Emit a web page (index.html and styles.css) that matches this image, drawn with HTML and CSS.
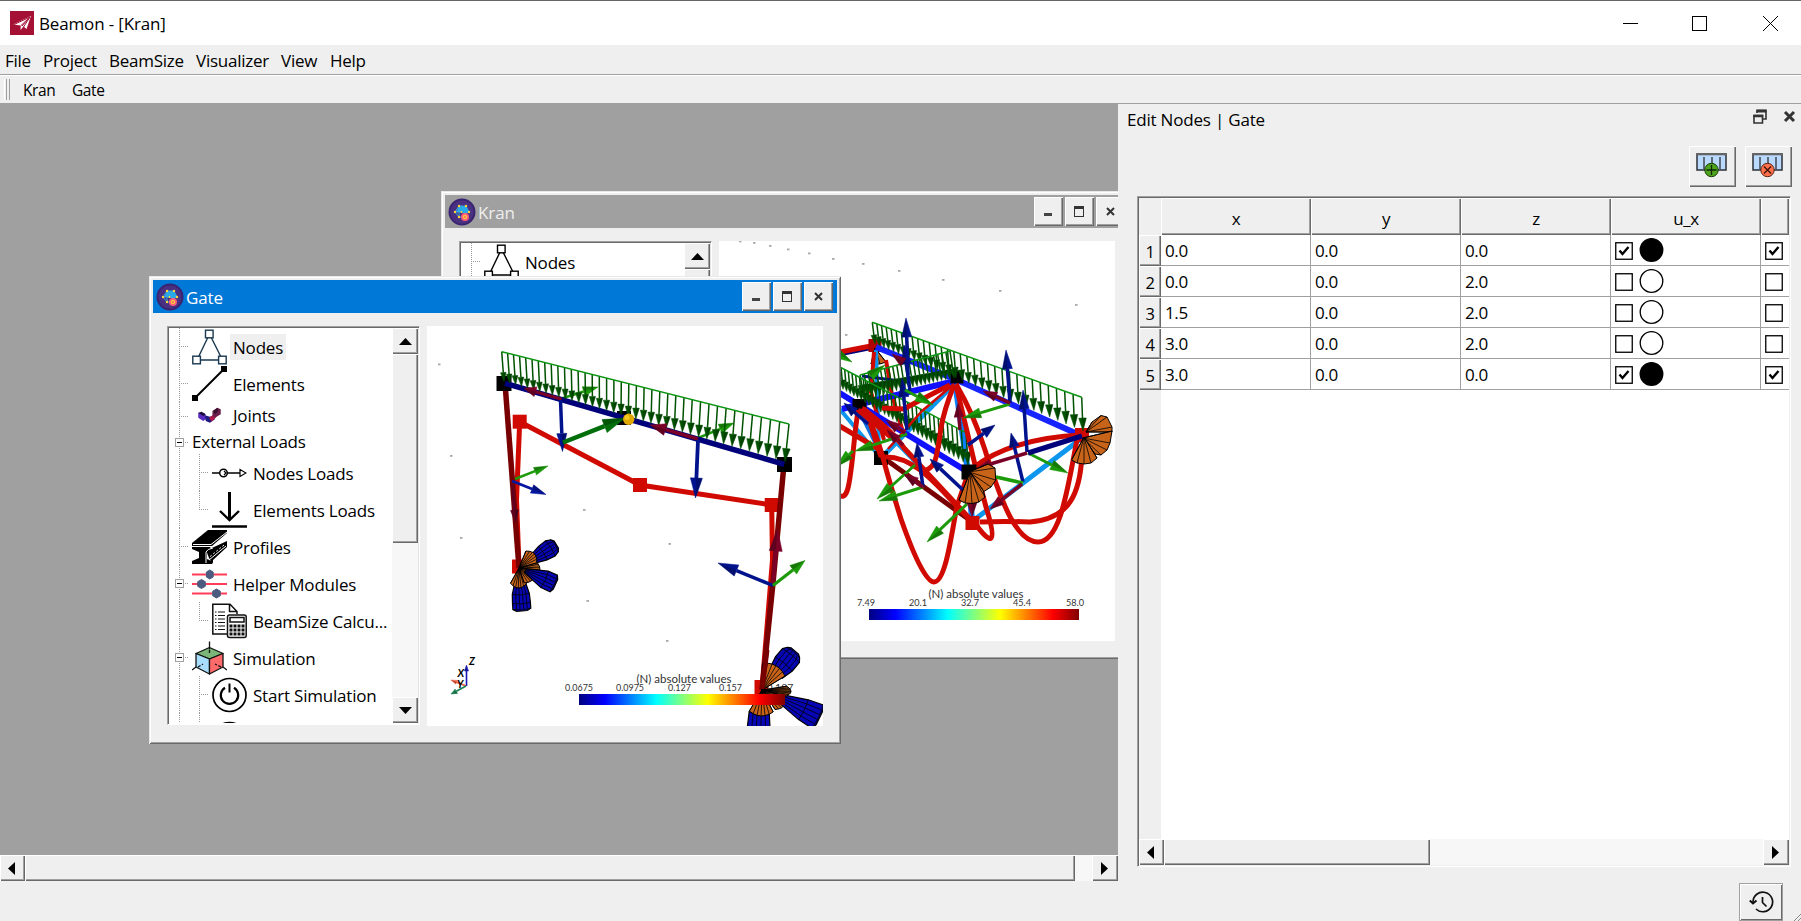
FILE: index.html
```html
<!DOCTYPE html>
<html lang="en">
<head>
<meta charset="utf-8">
<title>Beamon - [Kran]</title>
<link rel="stylesheet" href="styles.css">
</head>
<body>
<svg class="defs" width="0" height="0">
  <defs>
    <linearGradient id="jet">
      <stop offset="0" stop-color="#000080"/><stop offset=".125" stop-color="#0000ff"/>
      <stop offset=".375" stop-color="#00ffff"/><stop offset=".625" stop-color="#ffff00"/>
      <stop offset=".875" stop-color="#ff0000"/><stop offset="1" stop-color="#800000"/>
    </linearGradient>
    <symbol id="app" viewBox="0 0 28 28">
      <circle cx="14" cy="14" r="13.500" fill="#3a2471"/><circle cx="14" cy="14" r="11.500" fill="#4a3080"/>
      <path d="M11 8h7l3 6-4 3-3-3H8z" fill="#28a9e8"/>
      <path d="M11 8h7l3 6M7 14h8M11 8v11M7 14l4-6M7 14l4 5h3" fill="none" stroke="#35a5e0" stroke-width="1"/>
      <g fill="#ffd83a"><circle cx="11" cy="8" r="1.200"/><circle cx="18" cy="8" r="1.200"/><circle cx="21" cy="14" r="1.200"/><circle cx="7" cy="14" r="1.200"/><circle cx="13.500" cy="14" r="1"/><circle cx="11" cy="19" r="1.200"/></g>
      <circle cx="17" cy="19" r="4" fill="#ff5a7d"/><circle cx="17" cy="19" r="1.800" fill="#ff7e5d" stroke="#ffd83a" stroke-width="1"/>
    </symbol>
    <symbol id="nodes" viewBox="0 0 35 36">
      <g fill="#fff" stroke="currentColor" stroke-width="1.400"><path d="M5 31L17.500 5l13 26z"/><rect x="13.500" y="1.200" width="7.600" height="7.600"/><rect x=".8" y="27.200" width="7.600" height="7.600"/><rect x="26.600" y="27.200" width="7.600" height="7.600"/></g>
    </symbol>
    <symbol id="table" viewBox="0 0 31 25">
      <rect x="1" y="1" width="29" height="16" fill="#b9d9ff" stroke="#2b2f36" stroke-width="1.500"/><path d="M0 1.300h31" stroke="#666" stroke-width="2"/>
      <path d="M8 4v12M16 4v12M24 4v12" stroke="#5f6b7a" stroke-width="2"/>
    </symbol>
  </defs>
</svg>

<div class="app">
  <header class="titlebar">
    <svg class="logo" width="24" height="24" viewBox="0 0 24 24"><rect width="24" height="24" fill="#a51135"/><path d="M3 13.500L21 5 16.500 18l-3-2.500-3 3.500.3-4.500z" fill="#fff"/><path d="M3.500 13.800L20 6l-9 8.500M12 15l8-9-6.500 10" stroke="#a51135" stroke-width="1" fill="none"/></svg>
    <span class="title">Beamon - [Kran]</span>
    <svg class="syscontrols" width="160" height="20" viewBox="0 0 160 20" fill="none" stroke="#000" stroke-width="1"><path d="M0 10.500h15"/><rect x="69.500" y="3.500" width="14" height="14"/><path d="M140 3l15 15M155 3l-15 15"/></svg>
  </header>
  <nav class="menubar"><span class="m1">File</span><span class="m2">Project</span><span class="m3">BeamSize</span><span class="m4">Visualizer</span><span class="m5">View</span><span>Help</span></nav>
  <div class="toolbar"><i class="grip"></i><span class="kran">Kran</span><span>Gate</span></div>

  <div class="main">
    <div class="workspace">
      <div class="mdi">
        <section class="window kran-window">
          <div class="caption inactive"><svg width="28" height="28"><use href="#app"/></svg><span>Kran</span>
            <b class="cb"><i class="g-min"></i></b><b class="cb"><i class="g-max"></i></b><b class="cb"><svg width="9" height="9" viewBox="0 0 9 9"><path d="M1 1l7 7M8 1L1 8" stroke="#333" stroke-width="2"/></svg></b></div>
          <div class="content">
            <div class="treebox">
              <div class="tree"><div class="row"><i class="br tee"></i><svg class="ic black" width="35" height="36"><use href="#nodes"/></svg><span class="lb">Nodes</span></div></div>
              <div class="vscroll"><b class="sb"><svg width="13" height="7"><path d="M0 7L6.500 0 13 7z"/></svg></b><b class="thumb"></b></div>
            </div>
            <svg id="kran-view" class="view" width="396" height="400" viewBox="719 241 396 400"></svg>
          </div>
        </section>

        <section class="window gate-window">
          <div class="caption"><svg width="28" height="28"><use href="#app"/></svg><span>Gate</span>
            <b class="cb"><i class="g-min"></i></b><b class="cb"><i class="g-max"></i></b><b class="cb"><svg width="9" height="9" viewBox="0 0 9 9"><path d="M1 1l7 7M8 1L1 8" stroke="#333" stroke-width="2"/></svg></b></div>
          <div class="content">
            <div class="treebox">
              <div class="tree">
                <div class="row"><i class="br tee"></i><svg class="ic navy" width="35" height="36"><use href="#nodes"/></svg><span class="lb sel">Nodes</span></div>
                <div class="row"><i class="br tee"></i><svg class="ic" width="35" height="36" viewBox="0 0 35 36"><path d="M3 32L32 3" stroke="#000" stroke-width="2"/><path d="M29 0h6v6h-6zM0 29h6v6H0z"/></svg><span class="lb">Elements</span></div>
                <div class="row joints"><i class="br tee"></i><svg class="ic" width="35" height="20" viewBox="0 0 35 24"><path d="M4 8l8 1 2 6-4 3-6-4z" fill="#5a2bc0"/><path d="M4 8l4-1 5 3-3 2z" fill="#1a0a3a"/><path d="M12 11l6 2 5-2 1 5-6 4-5-2z" fill="#1d1a80"/><path d="M17 14l6-4 3 3-6 6z" fill="#b01848"/><path d="M21 6l6-4 4 2v6l-7 4-3-3z" fill="#6b1f4a"/><path d="M22 6l5-4 1 4-4 4z" fill="#36102b"/></svg><span class="lb">Joints</span></div>
                <div class="row ext"><i class="br tee"><em class="ex"></em></i><span class="lb">External Loads</span></div>
                <div class="row"><i class="br pass"></i><i class="br tee"></i><svg class="ic" width="35" height="12" viewBox="0 0 35 12" fill="none" stroke="#000" stroke-width="1.500"><path d="M0 6h7M15.500 6H28"/><circle cx="11.500" cy="6" r="3.800"/><path d="M28 2.500L34 6l-6 3.500zM12 4l2 2-2 2" stroke-width="1.200"/></svg><span class="lb">Nodes Loads</span></div>
                <div class="row"><i class="br pass"></i><i class="br end"></i><svg class="ic" width="35" height="36" viewBox="0 0 35 36" fill="none" stroke="#000"><path d="M17.500 0v28" stroke-width="3"/><path d="M8 19l9.500 9 9.500-9" stroke-width="2.400"/><path d="M0 34.500h35" stroke-width="2.500"/></svg><span class="lb">Elements Loads</span></div>
                <div class="row"><i class="br tee"></i><svg class="ic" width="35" height="36" viewBox="0 0 35 36"><path d="M16 1h19v3L20 17H0v-3z"/><path d="M0 18h18l2 3-5 1v8l5 2v3H0v-3l7-3v-6l-7-3z"/><path d="M17 29l-3-8 8-3L35 12v6L21 31v4z"/><path d="M1 15.500h18L35 3M17 31l17-14" stroke="#fff" fill="none"/><path d="M15 30L32 16" stroke="#fff" stroke-dasharray="2 2"/><path d="M14 34V23q1-3 7-4" stroke="#fff" fill="none"/></svg><span class="lb">Profiles</span></div>
                <div class="row"><i class="br tee"><em class="ex"></em></i><svg class="ic" width="35" height="36" viewBox="0 0 35 36"><path d="M0 8.500h35M0 18h35M0 27.500h35" stroke="#ff3d58" stroke-width="2"/><path d="M17.800 4l3.400 2v5l-3.400 2-3.400-2V6zM9.500 13.500l3.800 2.200v4.600L9.500 22.500l-3.800-2.200v-4.600zM24.500 23l3.800 2.200v4.600L24.500 32l-3.800-2.200v-4.600z" fill="#4c5a7f" stroke="#4c5a7f"/></svg><span class="lb">Helper Modules</span></div>
                <div class="row"><i class="br pass"></i><i class="br end"></i><svg class="ic" width="35" height="36" viewBox="0 0 35 36" fill="none" stroke="#111" stroke-width="1.500"><path d="M15 31H.8V1.200H18l7 7.300V11M17.500 1.500v7h7"/><path d="M3 9h1.500M6 9h7M3 12.500h1.500M6 12.500h7M3 16h1.500M6 16h7M3 19.500h1.500M6 19.500h7M3 23h1.500M6 23h7M3 26.500h1.500M6 26.500h7" stroke-width="1.200"/><rect x="15.500" y="12" width="18.700" height="22.500" rx="2" fill="#fff"/><rect x="18" y="14.500" width="14" height="4.500"/><path d="M17.500 23h15M17.500 27h15M17.500 31h15" stroke-width="3" stroke-dasharray="3 1"/></svg><span class="lb">BeamSize Calcu...</span></div>
                <div class="row"><i class="br tee"><em class="ex"></em></i><svg class="ic" width="35" height="36" viewBox="0 0 35 36" stroke="#111" stroke-width="1.300" stroke-linejoin="round"><path d="M17.500 7.500L31 13.500 17.500 19 4 13.500z" fill="#79b678"/><path d="M4 13.500L17.500 19v15L4 27z" fill="#a8defb"/><path d="M31 13.500L17.500 19v15L31 27z" fill="#ff6b6b"/><path d="M17.500 1.500v8M4 27l-4 3M31 27l4 3"/><path d="M6 27l5-3M29 27l-6-3M17.500 10v3" stroke-dasharray="3 1.500"/></svg><span class="lb">Simulation</span></div>
                <div class="row"><i class="br pass"></i><i class="br tee"></i><svg class="ic" width="35" height="36" viewBox="0 0 35 36" fill="none" stroke="#000" stroke-width="1.700"><circle cx="17.500" cy="18" r="16.500"/><path d="M17.500 6.500v9" stroke-width="2"/><path d="M13 10.800a8.700 8.700 0 1 0 9 0" stroke-width="2.200"/></svg><span class="lb">Start Simulation</span></div>
                <div class="row"><i class="br pass"></i><i class="br tee"></i><svg class="ic" width="35" height="36" viewBox="0 0 35 36" fill="none" stroke="#000" stroke-width="1.700"><circle cx="17.500" cy="25" r="16.500"/></svg></div>
              </div>
              <div class="vscroll"><b class="sb"><svg width="13" height="7"><path d="M0 7L6.500 0 13 7z"/></svg></b><b class="thumb"></b><i class="track"></i><b class="sb"><svg width="13" height="7"><path d="M0 0L6.500 7 13 0z"/></svg></b></div>
            </div>
            <svg id="gate-view" class="view" width="396" height="400" viewBox="427 326 396 400"></svg>
          </div>
        </section>
      </div>
      <div class="hscroll"><b class="sb"><svg width="7" height="13"><path d="M7 0L0 6.500 7 13z"/></svg></b><b class="thumb"></b><i class="track"></i><b class="sb"><svg width="7" height="13"><path d="M0 0L7 6.500 0 13z"/></svg></b></div>
    </div>

    <aside class="dock">
      <div class="dockhead"><span>Edit Nodes | Gate</span>
        <svg width="45" height="16" viewBox="0 0 45 16" fill="none" stroke="#333"><path d="M4 4V1.500h9V10h-3" stroke-width="1.600"/><path d="M3.500 2h10" stroke-width="3"/><path d="M1 6.500h8.500V14H1z" fill="#efefef" stroke-width="1.600"/><path d="M.3 7h10" stroke-width="2.500"/><path d="M32 3l9 9M41 3l-9 9" stroke-width="3"/></svg></div>
      <div class="tools">
        <button class="tool"><svg width="31" height="25" viewBox="0 0 31 25"><use href="#table" width="31" height="25"/><circle cx="15.500" cy="17" r="6.700" fill="#4ea41c" stroke="#173a08"/><path d="M15.500 12v10M10.500 17h10" stroke="#10260a" stroke-width="1.300"/></svg></button>
        <button class="tool"><svg width="31" height="25" viewBox="0 0 31 25"><use href="#table" width="31" height="25"/><circle cx="15.500" cy="17" r="6.700" fill="#ff714c" stroke="#5b2413"/><path d="M12 13.500l7 7M19 13.500l-7 7" stroke="#3a1207" stroke-width="1.300"/></svg></button>
      </div>
      <div class="grid">
        <div class="cells" id="cells"></div>
        <div class="hscroll"><b class="sb"><svg width="7" height="13"><path d="M7 0L0 6.500 7 13z"/></svg></b><b class="thumb"></b><i class="track"></i><b class="sb"><svg width="7" height="13"><path d="M0 0L7 6.500 0 13z"/></svg></b></div>
      </div>
    </aside>
  </div>

  <footer class="status"><button class="history"><svg width="25" height="24" viewBox="0 0 25 24" fill="none" stroke="#111" stroke-width="1.700"><path d="M4 12A9.800 9.800 0 1 1 7 19"/><path d="M.8 10.500L4 13.500l3.500-3" stroke-width="2"/><path d="M13.500 7v5.500l4 4"/></svg></button>
  <svg class="sizegrip" width="7" height="7"><path d="M0 7L7 0M4 7l3-3" stroke="#888"/></svg></footer>
</div>
<script src="scene.js"></script>
</body>
</html>
```

FILE: styles.css
```css
* { box-sizing: border-box; }
body { margin: 0; background: #efefef; font: 17px/24px "Open Sans", "Noto Sans", sans-serif; letter-spacing: -0.25px; color: #000; overflow: hidden; }
svg { display: block; flex: none; }
i, em, b { font-style: normal; font-weight: normal; }
.defs { position: absolute; }
.app { width: 1801px; height: 921px; display: flex; flex-direction: column; background: #efefef; overflow: hidden; }

.titlebar { height: 45px; background: #fff; border-top: 1px solid #666; display: flex; align-items: center; padding-left: 10px; flex: none; }
.title { margin-left: 5px; padding-top: 2px; letter-spacing: -0.15px; }
.syscontrols { margin-left: auto; margin-right: 18px; }
.menubar { height: 30px; border-bottom: 1px solid #a0a0a0; display: flex; align-items: center; padding-left: 5px; flex: none; padding-top: 2px; }
.m1 { width: 38px; } .m2 { width: 66px; } .m3 { width: 87px; } .m4 { width: 85px; } .m5 { width: 49px; }
.toolbar { height: 28px; border-top: 1px solid #fff; display: flex; align-items: center; flex: none; font-size: 15.5px; letter-spacing: -0.4px; padding-left: 4px; }
.grip { width: 6px; height: 21px; border-left: 1px solid #fff; border-right: 1px solid #a0a0a0; background: linear-gradient(90deg, transparent 1px, #a0a0a0 1px 2px, transparent 2px); margin-right: 13px; }
.kran { width: 49px; }

.main { display: flex; height: 778px; flex: none; }
.workspace { width: 1118px; display: flex; flex-direction: column; }
.mdi { position: relative; height: 752px; background: #a0a0a0; overflow: hidden; }

.window { position: absolute; width: 692px; height: 468px; background: #efefef; padding: 4px; box-shadow: inset 1px 1px #e8e8e8, inset -1px -1px #696969, inset 2px 2px #fff, inset -2px -2px #a0a0a0; }
.kran-window { left: 441px; top: 88px; }
.gate-window { left: 149px; top: 173px; }
.caption { height: 33px; background: #0078d7; color: #fff; display: flex; align-items: center; padding: 0 4px 0 3px; gap: 2px; letter-spacing: -0.1px; }
.caption.inactive { background: #a0a0a0; color: #eee; }
.caption span { flex: 1; padding-top: 2px; }
.cb, .sb, .thumb, .tool { background: #efefef; box-shadow: inset 1px 1px #fff, inset -1px -1px #696969, inset -2px -2px #a0a0a0; display: flex; align-items: center; justify-content: center; }
.cb { width: 29px; height: 29px; }
.g-min { width: 8px; height: 3px; background: #444; margin: 6px 2px 0 0; }
.g-max { width: 10px; height: 11px; border: 1px solid #333; border-top-width: 3px; margin-right: 1px; }
.content { display: flex; gap: 7px; padding: 13px 0 0 14px; }

.treebox { width: 253px; height: 399px; display: flex; background: #fff; border: 1px solid; border-color: #a0a0a0 #fff #fff #a0a0a0; box-shadow: inset 1px 1px #696969, inset -1px 0 #e3e3e3; padding: 1px; overflow: hidden; }
.tree { width: 223px; overflow: hidden; }
.row { height: 37px; display: flex; align-items: center; }
.joints { height: 28px; }
.ext { height: 24px; }
.br { width: 20px; height: 100%; flex: none; display: flex; align-items: center; background-repeat: no-repeat; }
.br { --v: repeating-linear-gradient(#9a9a9a 0 1px, transparent 1px 2px); --h: repeating-linear-gradient(90deg, #9a9a9a 0 1px, transparent 1px 2px); }
.tee { background-image: var(--v), var(--h); background-size: 1px 100%, 10px 1px; background-position: 10px 0, 10px 50%; }
.end { background-image: var(--v), var(--h); background-size: 1px 50%, 10px 1px; background-position: 10px 0, 10px 50%; }
.pass { background-image: var(--v); background-size: 1px 100%; background-position: 10px 0; }
.ex { width: 9px; height: 9px; margin-left: 6px; border: 1px solid #a0a0a0; background: linear-gradient(#000, #000) center / 5px 1px no-repeat #fff; }
.ic { margin-left: 3px; }
.navy { color: #18384f; } .black { color: #000; }
.lb { margin-left: 3px; padding: 2px 3px 0; white-space: nowrap; letter-spacing: -0.2px; }
.joints .lb { padding-top: 0; }
.ext .lb { margin-left: 0; padding-top: 0; }
.sel { background: #efefef; }
.vscroll { width: 26px; display: flex; flex-direction: column; background: #f7f7f7; }
.vscroll .sb { height: 26px; flex: none; }
.vscroll .thumb { height: 189px; flex: none; }
.track { flex: 1; background: #f7f7f7; }
.view { background: #fff; }

.hscroll { height: 26px; display: flex; flex: none; }
.hscroll .sb { width: 26px; padding-right: 2px; }
.hscroll .sb:first-child { width: 25px; padding-right: 3px; }
.workspace .hscroll .thumb { width: 1050px; }
.grid .hscroll .thumb { width: 266px; }

.dock { flex: 1; border-top: 1px solid #a0a0a0; padding: 4px 0 0 9px; font-size: 17px; letter-spacing: -0.4px; }
.dockhead { display: flex; justify-content: space-between; height: 38px; letter-spacing: -0.2px; }
.dockhead svg { margin: 1px 3px 0 0; }
.tools { display: flex; justify-content: flex-end; gap: 9px; padding-right: 9px; }
.tool { width: 47px; height: 41px; border: 0; padding: 0 2px 2px 0; margin: 0; }
.grid { margin: 9px 0 0 10px; width: 654px; height: 671px; border: 1px solid; border-color: #a0a0a0 #fff #fff #a0a0a0; box-shadow: inset 1px 1px #696969; padding: 1px; display: flex; flex-direction: column; }
.cells { flex: 1; display: grid; grid-template-columns: 22px repeat(4, 150px) 28px; grid-template-rows: 37px repeat(5, 31px) 1fr; background: #fff; overflow: hidden; }
.hd { background: #efefef; box-shadow: inset 1px 1px #fff, inset -1px -1px #696969, inset -2px -2px #a0a0a0; display: flex; align-items: center; justify-content: center; padding-top: 4px; }
.hd.n { padding: 2px 0 0; font-size: 16.5px; }
.hd.corner, .hd.rest { box-shadow: none; }
.cell { border-right: 1px solid #a0a0a0; border-bottom: 1px solid #a0a0a0; display: flex; align-items: center; padding: 2px 0 0 4px; gap: 6px; overflow: hidden; }
.cell.last { border-right: 0; }

.status { flex: 1; position: relative; display: flex; justify-content: flex-end; padding: 2px 18px 0 0; }
.history { width: 44px; height: 38px; border: 1px solid #a0a0a0; background: #efefef; box-shadow: inset 1px 1px #fff, inset -1px -1px #696969; display: flex; align-items: center; justify-content: center; padding: 0; }
.sizegrip { position: absolute; right: 0; bottom: 0; }
.legend { font-family: Lato, sans-serif; fill: #333; letter-spacing: 0; }
```

FILE: scene.js
```js
const r1 = v => Math.round(v * 10) / 10;
const pts = a => a.map(p => p.map(r1).join(',')).join(' ');

function line(a, color, w) {
  return `<polyline points="${pts(a)}" fill="none" stroke="${color}" stroke-width="${w}"/>`;
}
function curve(d, w = 5) {
  return `<path d="${d}" fill="none" stroke="#d00a00" stroke-width="${w}" stroke-linejoin="round"/>`;
}
function square(x, y, color, s = 14) {
  return `<rect x="${x - s / 2}" y="${y - s / 2}" width="${s}" height="${s}" fill="${color}"/>`;
}
function arrow(x1, y1, x2, y2, color, w = 3, hl = 14, hw = 5) {
  const L = Math.hypot(x2 - x1, y2 - y1), ux = (x2 - x1) / L, uy = (y2 - y1) / L;
  const bx = x2 - ux * hl, by = y2 - uy * hl;
  return line([[x1, y1], [bx, by]], color, w) +
    `<polygon points="${pts([[x2, y2], [bx - uy * hw, by + ux * hw], [bx, by], [bx + uy * hw, by - ux * hw]])}" fill="${color}" stroke="${color}" stroke-width=".5"/>` +
    `<polygon points="${pts([[x2, y2], [bx, by], [bx + uy * hw, by - ux * hw]])}" fill="#000" opacity=".22"/>`;
}
// Distributed load: evenly foreshortened arrows between a top and a bottom edge.
function load(t0, t1, b0, b1, n, first) {
  let s = '';
  for (let i = 0; i <= n; i++) {
    const f = first * i / n + (1 - first) * (i / n) ** 2;
    const tx = t0[0] + (t1[0] - t0[0]) * f, ty = t0[1] + (t1[1] - t0[1]) * f;
    const bx = b0[0] + (b1[0] - b0[0]) * f, by = b0[1] + (b1[1] - b0[1]) * f;
    s += arrow(tx, ty, bx, by, '#005200', 1.5, 9 + 4 * f, 2.8 + f);
  }
  return s + line([t0, t1], '#0a9410', 1.5);
}
function fan(apex, rim, color = '#c8641a') {
  return `<polygon points="${pts([apex, ...rim])}" fill="${color}" stroke="#000" stroke-width="1"/>` +
    rim.map(p => line([apex, p], '#000', .8)).join('');
}
function cone(x, y, deg, len, hw, color) {
  const a = deg * Math.PI / 180, c = Math.cos(a), s = Math.sin(a), rim = [];
  for (let i = -3; i <= 3; i++) {
    const d = len - (i * i) * .5, o = hw * i / 3;
    rim.push([x + c * d - s * o, y + s * d + c * o]);
  }
  return fan([x, y], rim, color);
}
// Barrel given as [distance, half width] rings along a direction.
function barrel(x, y, deg, rings) {
  const a = deg * Math.PI / 180, c = Math.cos(a), s = Math.sin(a);
  const at = (d, o) => [x + c * d - s * o, y + s * d + c * o];
  const left = rings.map(r => at(r[0], r[1])), right = rings.map(r => at(r[0], -r[1])).reverse();
  const e = rings[rings.length - 1];
  let out = `<polygon points="${pts([...left, at(e[0] + 2, e[1] * .6), at(e[0] + 2, -e[1] * .6), ...right])}" fill="#0606b4" stroke="#000" stroke-width="1.2"/>`;
  for (const k of [-.6, -.2, .2, .6]) out += line(rings.map(r => at(r[0], r[1] * k)), '#000', .8);
  for (const r of rings.slice(1)) out += line([at(r[0], r[1]), at(r[0] + 1, 0), at(r[0], -r[1])], '#000', .8);
  return out;
}
const specks = a => a.map(p => `<rect x="${p[0]}" y="${p[1]}" width="2.5" height="1.8" fill="#a8a8a8"/>`).join('');
const bar = (x, y, w) => `<rect x="${x}" y="${y}" width="${w}" height="11" fill="url(#jet)"/>`;
const label = (x, y, t, size, w) => `<text class="legend" x="${x}" y="${y}" font-size="${size}" text-anchor="middle" textLength="${w}" lengthAdjust="spacingAndGlyphs">${t}</text>`;

const RED = '#d00a00', DARK = '#780000', NAVY = '#00007a', BLUE = '#00128c', GREEN = '#1d9a0a', MAG = '#7a0028';

function gate() {
  let s = specks([[438, 363.500], [450, 455], [460, 537], [583, 509], [668.500, 543], [586.500, 600], [666, 640]]);
  s += arrow(560, 399, 598, 387, GREEN, 2.5, 15, 5) + arrow(698, 438, 734, 423, GREEN, 2.5, 15, 5);
  s += line([[519.700, 421.700], [516.500, 500], [519, 566]], RED, 5);
  s += line([[519.700, 421.700], [640, 485], [771.700, 505], [772.500, 560], [762, 688]], RED, 5);
  s += square(519.700, 421.700, RED) + square(640, 485, RED) + square(771.700, 505, RED) + square(519, 566.500, RED) + square(761.500, 687, RED);
  s += line([[505, 383], [519, 568]], DARK, 5.500) + line([[784, 464], [773, 583], [762, 690]], DARK, 5.500);
  s += square(504, 383.500, '#000', 15) + square(624, 418, '#000', 14) + square(784.500, 464.500, '#000', 15);
  s += line([[505, 383.300], [784.300, 464.300]], NAVY, 5.500);
  s += load([501.700, 351.700], [789, 424], [504, 381.500], [785, 461.500], 38, .77);
  s += arrow(561.700, 399.300, 524, 388.300, MAG, 3, 12, 5) + arrow(698, 439, 650, 425, MAG, 3.500, 16, 6);
  s += arrow(560.500, 400, 562.500, 451.500, BLUE, 3.500, 18, 5) + arrow(698, 440, 695.500, 498, BLUE, 3.800, 20, 6);
  s += arrow(563, 442.500, 625, 418, '#006e0a', 4.500, 22, 7);
  s += '<circle cx="628.700" cy="419.300" r="5.700" fill="#e0a800"/><circle cx="627" cy="417.500" r="2.500" fill="#f6c820"/>';
  s += arrow(515, 479, 548, 466, GREEN, 2.500, 14, 4) + arrow(512, 481, 546, 494.500, '#0516a0', 2.800, 15, 4.500);
  s += arrow(512.500, 485, 515.500, 523, '#5f0020', 3, 13, 4);
  s += arrow(773, 585, 777.500, 529, MAG, 4, 22, 6.500) + arrow(773, 585.500, 718, 563, BLUE, 3.500, 20, 6) + arrow(773, 585.500, 805, 560.500, GREEN, 3.200, 15, 5.500);

  s += cone(519, 568, 5, 21, 8, '#a95818') + barrel(519, 568, 86, [[17, 6], [26, 8.500], [35, 9], [41, 9]]) + cone(519, 568, 92, 20, 8);
  s += barrel(519, 568, -32, [[18, 5], [28, 8], [37, 9], [42, 7]]) + cone(519, 568, -42, 21, 8);
  s += cone(519, 568, 40, 18, 8) + barrel(519, 568, 24, [[7, 2], [28, 9], [38, 9]]);
  s += label(780, 691, '0.187', 9.5, 27);
  s += barrel(760, 690, 92, [[22, 10], [45, 12]]) + cone(762, 690, 92, 26, 12);
  s += cone(763, 690, 38, 26, 8) + barrel(763, 690, 26, [[22, 5], [45, 11], [61, 13]]) + cone(763, 690, 3, 28, 5, '#8b4a14');
  s += barrel(762, 690, -50, [[22, 8], [34, 11], [45, 11], [49, 8]]) + cone(762, 690, -60, 28, 13);
  s += line([[767, 650], [762, 689]], DARK, 5);
  s += bar(579, 694, 206) + label(684, 682.500, '(N) absolute values', 10.500, 95);
  s += [['0.0675', 579, 28], ['0.0975', 630, 28], ['0.127', 679.500, 23], ['0.157', 730.500, 23]].map(l => label(l[1], 691, l[0], 9.5, l[2])).join('');
  s += arrow(466.500, 686, 466.500, 665, '#1717b5', 1.600, 6, 2) + arrow(466, 686, 451, 680, '#e85a3c', 1.800, 6, 2) + arrow(466, 686, 451, 694, '#1c8552', 1.800, 6, 2.500);
  s += '<g font-family="Lato" font-size="10.5" font-weight="bold" font-style="italic"><text x="469" y="665">Z</text><text x="457.500" y="677">X</text><text x="457" y="688">Y</text></g>';
  return s;
}

function kran() {
  const LB = '#0c96ee', BB = '#1010ff';
  let s = specks([[739, 240.500], [753, 242], [769, 245], [787, 248.500], [808, 252.500], [832, 258], [862, 263], [898, 270], [942, 279], [999, 290], [1075, 304], [845, 334]]);
  s += line([[841, 354], [876, 347]], NAVY, 4) + line([[835, 353], [876, 345]], RED, 5);
  s += square(875, 345.500, '#b00000', 13) + fan([875, 348], [[871, 364], [880, 364], [886, 362]], '#c8641a');
  s += line([[876, 350], [879, 450]], LB, 4) + line([[874, 352], [871, 392], [884, 440]], RED, 4) + line([[886, 360], [892, 395], [903, 432]], RED, 4);
  s += line([[955, 383], [884, 455]], LB, 5) + line([[838, 407], [880, 457]], LB, 4) + line([[858, 408], [880, 452]], '#0a70e0', 4);
  s += line([[862, 408], [972, 520]], LB, 3.500) + line([[955, 382], [968, 472], [972, 520]], '#0a80ff', 6);
  s += line([[881, 456], [971, 521]], DARK, 5) + square(881, 458, '#000');
  s += line([[1082, 438], [1023, 483], [974, 520]], LB, 5);
  s += line([[838, 392], [968, 472]], BB, 6) + line([[955, 381], [884, 398], [842, 409]], BB, 6) + line([[876, 347], [957, 380], [1082, 436]], '#1824ff', 6);
  s += line([[862, 376], [908, 382]], '#061080', 3);
  s += square(957, 377, '#000', 13) + square(859.500, 406, '#000', 14) + square(1082, 435, RED, 14) + square(972.500, 523, RED, 14);
  s += load([872.300, 322.300], [1081.700, 397.300], [875, 344], [1083, 431], 32, .68);
  s += load([950, 351], [860, 375], [954, 378], [864, 398], 22, 1);
  s += load([834, 364], [966, 432.700], [836, 385], [968, 465], 32, .85);
  s += curve('M864 408Q876 432 883 458T901 519Q923 582 934 582C946 582 952 530 957 506L968 474') + curve('M858 410Q855 431 853 453C849 491 847 500 838 495');
  s += curve('M956 384Q974 415 985 450C1002 505 1017 542 1038 542C1061 542 1068 485 1077 440') + curve('M980 522Q1005 521 1030 522C1070 519 1080 493 1082 455');
  s += curve('M973 468C1000 447 1035 437 1082 435') + curve('M954 385Q944 410 941 428C936 462 936 470 919 472') + curve('M950 385Q920 400 904 409L882 408');
  s += curve('M884 457C920 455 946 499 972 521') + curve('M862 408Q892 430 904 448L971 520') + curve('M956 385Q967 432 976 469L986 507C998 545 991 545 977 526') + curve('M838 425L880 450');
  s += curve('M888 449L922 411L954 384', 2.500) + curve('M866 410L881 457') + curve('M858 410L892 438');
  const B = [[908, 375, 906, 318], [910, 391, 904, 345], [907, 430, 902, 378], [1010, 403, 1006, 350], [1027, 452, 1023, 390], [1023, 482, 1011, 433], [968, 445, 995, 425], [963, 490, 930, 459], [923, 487, 917, 443], [868, 424, 844, 403]];
  s += B.map(a => arrow(...a, BLUE, 3.500, a[3] < 400 ? 19 : 14, 5)).join('');
  const G = [[1010, 404, 963, 418], [1028, 453, 1068, 473], [907, 434, 855, 451], [915, 465, 877, 499], [923, 487, 879, 501], [967, 504, 927, 542], [905, 390, 933, 405], [853, 451, 836, 467], [870, 376, 885, 365], [838, 354, 852, 362]];
  s += G.map(a => arrow(...a, GREEN, 3, 18, 5)).join('') + line([[1023, 483], [996, 477]], GREEN, 3.500);
  const M = [[1010, 403, 983, 391], [1027, 453, 977, 468], [1022, 484, 990, 509], [960, 430, 958, 403], [923, 487, 904, 474], [905, 433, 886, 420], [903, 362, 892, 354], [972, 490, 972, 517], [903, 445, 887, 430]];
  s += M.map(a => arrow(...a, MAG, 3.500, 14, 4.800)).join('');
  s += line([[1082, 436], [1028, 453]], NAVY, 5);
  s += square(969, 472, '#000', 15);
  s += fan([969, 472], [[988, 464], [995, 468], [995.700, 480], [991, 487], [983, 492]]) + fan([970, 472], [[959, 500], [965, 503], [972, 503.500], [979, 502], [985, 497], [983, 490]]);
  s += fan([1086, 432], [[1092, 422], [1101, 415.500], [1107, 417], [1112, 427], [1112, 432]]) + fan([1083, 438], [[1112, 431], [1110, 443], [1107, 450], [1101, 455], [1095, 454]]) + fan([1084, 437], [[1071.500, 460], [1077, 463], [1084, 464], [1091, 463], [1097, 458]]);
  s += bar(869, 609, 210) + label(976, 597.500, '(N) absolute values', 10.500, 95);
  s += [['7.49', 866], ['20.1', 918], ['32.7', 970], ['45.4', 1022], ['58.0', 1075]].map(l => label(l[1], 606, l[0], 9.5, 18)).join('');
  return s;
}
document.getElementById('gate-view').innerHTML = gate();
document.getElementById('kran-view').innerHTML = kran();

const rows = [['0.0', '0.0', '0.0', 1], ['0.0', '0.0', '2.0', 0], ['1.5', '0.0', '2.0', 0], ['3.0', '0.0', '2.0', 0], ['3.0', '0.0', '0.0', 1]];
const check = on => `<svg width="18" height="18" viewBox="0 0 18 18"><rect x=".75" y=".75" width="16.500" height="16.500" fill="#fff" stroke="#000" stroke-width="1.300"/>${on ? '<path d="M4.500 8.500l3 3.500 6-7" fill="none" stroke="#000" stroke-width="2.400"/>' : ''}</svg>`;
const disc = on => `<svg width="25" height="27" viewBox="0 0 25 27"><circle cx="12.500" cy="12" r="11.300" fill="${on ? '#000' : '#fff'}" stroke="#000" stroke-width="1.300"/></svg>`;
let html = '<div class="hd corner"></div>' + ['x', 'y', 'z', 'u_x', ''].map(h => `<div class="hd">${h}</div>`).join('');
rows.forEach((r, i) => {
  html += `<div class="hd n">${i + 1}</div>` + r.slice(0, 3).map(v => `<div class="cell">${v}</div>`).join('') +
    `<div class="cell">${check(r[3])}${disc(r[3])}</div><div class="cell last">${check(r[3])}</div>`;
});
document.getElementById('cells').innerHTML = html + '<div class="hd rest"></div>';
```
